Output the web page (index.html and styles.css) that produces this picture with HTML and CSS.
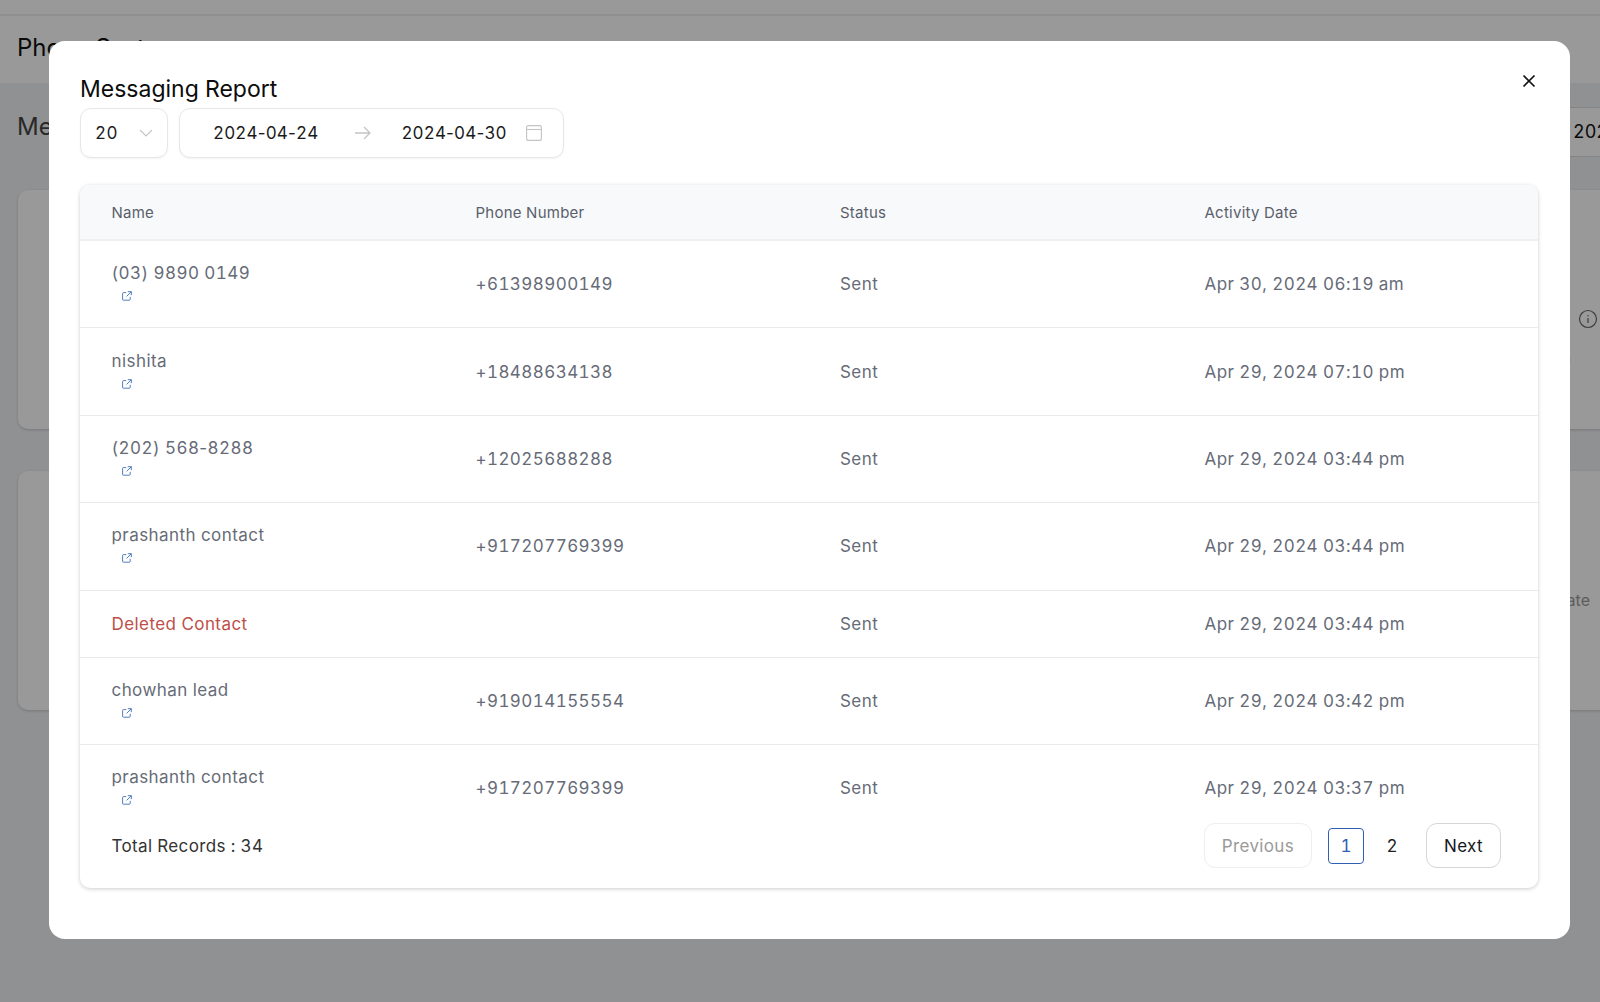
FILE: index.html
```html
<!DOCTYPE html>
<html lang="en">
<head>
<meta charset="utf-8">
<title>Messaging Report</title>
<link rel="stylesheet" href="styles.css">
</head>
<body>
<div class="page">
  <div class="topbar"></div>
  <header class="page-head"><h1>Phone System</h1></header>
  <main class="page-main">
    <div class="section-head">
      <h2>Messaging</h2>
      <div class="bg-date">2024-04-24</div>
    </div>
    <div class="bg-card bg-card-one">
      <svg class="bg-info" viewBox="0 0 20 20" width="20" height="20"><circle cx="10" cy="10" r="8.5" fill="none" stroke="#666" stroke-width="1.2"/><path d="M10 9v5M10 6v1.2" stroke="#666" stroke-width="1.2"/></svg>
      <span class="bg-num">6</span>
    </div>
    <div class="bg-card bg-card-two"><span class="bg-note">Date</span></div>
  </main>
</div>
<div class="overlay"></div>
<section class="modal">
  <button class="close" aria-label="Close">
    <svg viewBox="0 0 14 14" width="14" height="14"><path d="M1.5 1.5l11 11M12.5 1.5l-11 11" stroke="#111" stroke-width="1.7" fill="none"/></svg>
  </button>
  <h3 class="modal-title">Messaging Report</h3>
  <div class="filters">
    <div class="select">
      <span>20</span>
      <svg viewBox="0 0 14 8" width="14" height="8"><path d="M1 1l6 6 6-6" stroke="#c4c4c4" stroke-width="1.1" fill="none"/></svg>
    </div>
    <div class="range">
      <span class="range-from">2024<span class="hy">-</span>04<span class="hy">-</span>24</span>
      <svg class="range-arrow" viewBox="0 0 16 14" width="16" height="14"><path d="M0 7h15M9 1l6 6-6 6" stroke="#c4c4c4" stroke-width="1.3" fill="none"/></svg>
      <span class="range-to">2024<span class="hy">-</span>04<span class="hy">-</span>30</span>
      <svg class="range-cal" viewBox="0 0 16 16" width="16" height="16"><rect x=".6" y=".6" width="14.8" height="14.8" rx="2" fill="none" stroke="#c4c4c4" stroke-width="1.1"/><path d="M.6 4.5h14.8" stroke="#c4c4c4" stroke-width="1.1"/></svg>
    </div>
  </div>
  <div class="table-card">
    <div class="row head">
      <div>Name</div><div>Phone Number</div><div>Status</div><div>Activity Date</div>
    </div>
    <div class="rows">
      <div class="row">
        <div class="name">(03) 9890 0149<a class="ext"><svg viewBox="0 0 10 10" width="10" height="10"><path d="M4.2 1.6H1.4a.8.8 0 0 0-.8.8v6a.8.8 0 0 0 .8.8h6a.8.8 0 0 0 .8-.8V5.8M5.8.7h3.5v3.5M9.3.7L4.6 5.4" fill="none" stroke="#3f6fb5" stroke-width=".9"/></svg></a></div>
        <div>+61398900149</div><div>Sent</div><div>Apr 30, 2024 06:19 am</div>
      </div>
      <div class="row">
        <div class="name">nishita<a class="ext"><svg viewBox="0 0 10 10" width="10" height="10"><path d="M4.2 1.6H1.4a.8.8 0 0 0-.8.8v6a.8.8 0 0 0 .8.8h6a.8.8 0 0 0 .8-.8V5.8M5.8.7h3.5v3.5M9.3.7L4.6 5.4" fill="none" stroke="#3f6fb5" stroke-width=".9"/></svg></a></div>
        <div>+18488634138</div><div>Sent</div><div>Apr 29, 2024 07:10 pm</div>
      </div>
      <div class="row">
        <div class="name"><span>(202) 568<span class="hy">-</span>8288</span><a class="ext"><svg viewBox="0 0 10 10" width="10" height="10"><path d="M4.2 1.6H1.4a.8.8 0 0 0-.8.8v6a.8.8 0 0 0 .8.8h6a.8.8 0 0 0 .8-.8V5.8M5.8.7h3.5v3.5M9.3.7L4.6 5.4" fill="none" stroke="#3f6fb5" stroke-width=".9"/></svg></a></div>
        <div>+12025688288</div><div>Sent</div><div>Apr 29, 2024 03:44 pm</div>
      </div>
      <div class="row">
        <div class="name">prashanth contact<a class="ext"><svg viewBox="0 0 10 10" width="10" height="10"><path d="M4.2 1.6H1.4a.8.8 0 0 0-.8.8v6a.8.8 0 0 0 .8.8h6a.8.8 0 0 0 .8-.8V5.8M5.8.7h3.5v3.5M9.3.7L4.6 5.4" fill="none" stroke="#3f6fb5" stroke-width=".9"/></svg></a></div>
        <div>+917207769399</div><div>Sent</div><div>Apr 29, 2024 03:44 pm</div>
      </div>
      <div class="row short">
        <div class="deleted">Deleted Contact</div>
        <div></div><div>Sent</div><div>Apr 29, 2024 03:44 pm</div>
      </div>
      <div class="row">
        <div class="name">chowhan lead<a class="ext"><svg viewBox="0 0 10 10" width="10" height="10"><path d="M4.2 1.6H1.4a.8.8 0 0 0-.8.8v6a.8.8 0 0 0 .8.8h6a.8.8 0 0 0 .8-.8V5.8M5.8.7h3.5v3.5M9.3.7L4.6 5.4" fill="none" stroke="#3f6fb5" stroke-width=".9"/></svg></a></div>
        <div>+919014155554</div><div>Sent</div><div>Apr 29, 2024 03:42 pm</div>
      </div>
      <div class="row">
        <div class="name">prashanth contact<a class="ext"><svg viewBox="0 0 10 10" width="10" height="10"><path d="M4.2 1.6H1.4a.8.8 0 0 0-.8.8v6a.8.8 0 0 0 .8.8h6a.8.8 0 0 0 .8-.8V5.8M5.8.7h3.5v3.5M9.3.7L4.6 5.4" fill="none" stroke="#3f6fb5" stroke-width=".9"/></svg></a></div>
        <div>+917207769399</div><div>Sent</div><div>Apr 29, 2024 03:37 pm</div>
      </div>
    </div>
    <div class="table-foot">
      <span class="total">Total Records : 34</span>
      <nav class="pager">
        <span class="btn disabled">Previous</span>
        <span class="page-num current">1</span>
        <span class="page-num">2</span>
        <span class="btn">Next</span>
      </nav>
    </div>
  </div>
</section>
</body>
</html>
```
FILE: styles.css
```css
* { box-sizing: border-box; }
html, body { margin: 0; height: 100%; overflow: hidden; }
body { font-family: Inter, "Liberation Sans", sans-serif; background: #f0f2f5; color: #111; font-variant-numeric: tabular-nums; }
.hy { font-variant-numeric: normal; }
.page { height: 1002px; display: flex; flex-direction: column; overflow: hidden; }
.topbar { height: 16px; background: #fff; border-bottom: 2px solid #eee; }
.page-head { height: 67px; background: #fff; padding: 16px 17px; flex: none; }
.page-head h1 { margin: 0; font-size: 24px; line-height: 32px; font-weight: 400; color: #111; }
.page-main { padding: 24px 0 0 18px; }
.section-head { display: flex; justify-content: space-between; align-items: center; height: 50px; margin-bottom: 33px; }
.section-head h2 { margin: 0 0 12px -1px; font-size: 24px; font-weight: 400; color: #444; }
.bg-date { width: 300px; height: 50px; margin-right: -100px; border: 1px solid #ddd; background: #fff; font-size: 18px; line-height: 48px; padding-left: 172px; color: #111; overflow: hidden; white-space: nowrap; }
.bg-card { position: relative; height: 239px; margin-right: -20px; background: #fff; border-radius: 10px; box-shadow: 0 1px 3px rgba(0,0,0,.18); }
.bg-card-two { margin-top: 42px; }
.bg-info { position: absolute; right: 22px; top: 119px; }
.bg-num { position: absolute; right: 48px; top: 150px; font-size: 28px; color: #111; }
.bg-note { position: absolute; right: 30px; top: 119px; font-size: 16px; color: #999; }
.overlay { position: fixed; inset: 0; background: rgba(0,0,0,.4); }
.modal { position: fixed; left: 49px; top: 41px; width: 1521px; height: 898px; padding: 30px 31px 0; background: #fff; border-radius: 16px; }
.close { position: absolute; top: 32px; right: 33px; width: 16px; height: 16px; padding: 1px; border: 0; background: none; display: flex; }
.modal-title { margin: 0; font-size: 23px; line-height: 37px; font-weight: 400; color: #0c0c0c; }
.filters { display: flex; gap: 11px; }
.select, .range { height: 50px; display: flex; align-items: center; border: 1.5px solid #e7e7e7; border-radius: 11px; background: #fff; font-size: 17px; letter-spacing: .45px; color: #1a1a1a; box-shadow: 0 1px 2px rgba(0,0,0,.05); }
.select { width: 88px; padding: 0 14px; justify-content: space-between; }
.range { width: 385px; padding-left: 33px; letter-spacing: .15px; }
.range-arrow { margin-left: 37px; }
.range-to { margin-left: 30px; }
.range-cal { margin-left: 19px; }
.table-card { margin-top: 27px; width: 1458px; height: 703px; border-radius: 10px; overflow: hidden; background: #fff; box-shadow: 0 1px 4px rgba(0,0,0,.2); display: flex; flex-direction: column; }
.row { display: grid; grid-template-columns: 364px 364.5px 364.5px 1fr; align-items: center; height: 87.4px; padding-left: 31.5px; border-bottom: 1px solid #e9eaec; font-size: 17px; letter-spacing: .43px; color: #666b77; flex: none; }
.row.short { height: 67px; }
.row.head { height: 56px; background: #f8f9fb; border-bottom: 2px solid #eff0f2; font-size: 15px; letter-spacing: .25px; font-weight: 400; color: #5a5f6b; }
.rows { height: 567px; overflow: hidden; flex: none; }
.name { display: flex; flex-direction: column; align-items: flex-start; margin-top: -4px; }
.ext { display: flex; margin: 8px 0 0 10px; }
.deleted { color: #bd4f49; }
.table-foot { flex: 1; display: flex; justify-content: space-between; align-items: center; padding: 0 37px 5px 31.5px; font-size: 17px; letter-spacing: .35px; color: #333; }
.pager { display: flex; align-items: center; }
.btn { height: 45px; padding: 0 17px; display: flex; align-items: center; border: 1.5px solid #d6d6d6; border-radius: 11px; color: #16181d; }
.btn.disabled { border-color: #eee; color: #9a9a9a; }
.page-num { width: 36px; height: 36px; margin-left: 16px; display: flex; align-items: center; justify-content: center; border-radius: 4px; color: #222; }
.page-num + .page-num { margin-left: 10px; }
.page-num.current { border: 1.5px solid #2f5fb3; color: #2f5fb3; }
.page-num + .btn { margin-left: 16px; }
```
